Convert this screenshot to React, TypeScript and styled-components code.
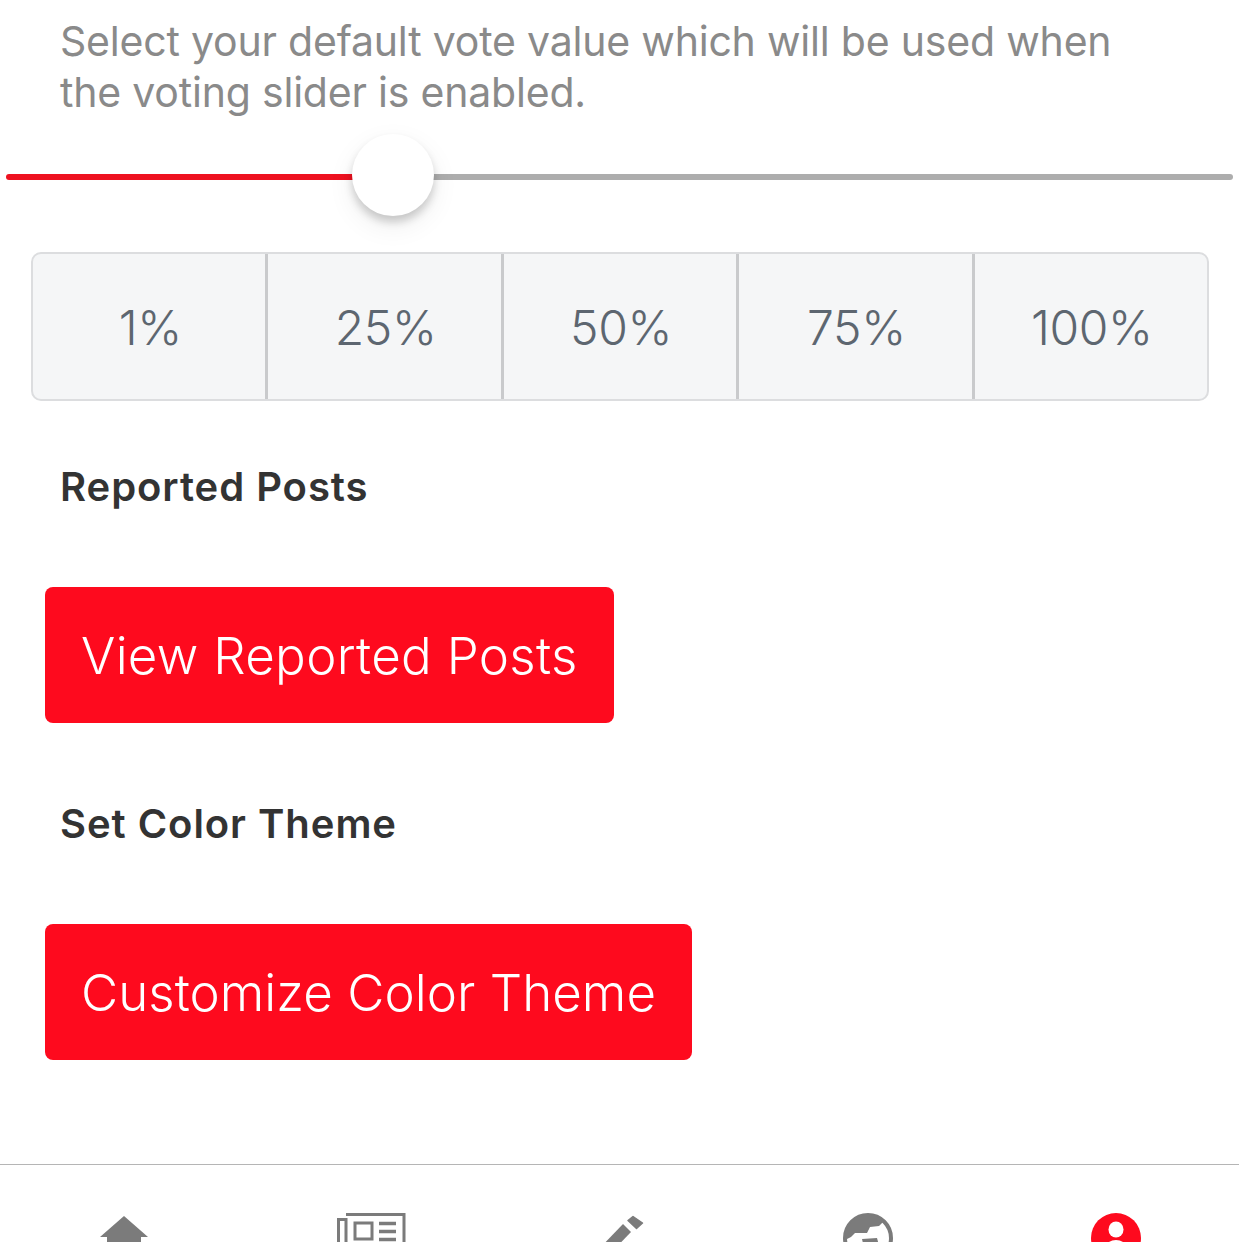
import React from 'react';
import styled, { createGlobalStyle } from 'styled-components';

const Global = createGlobalStyle`
    html, body {
        margin: 0;
        padding: 0;
        background: #fff;
    }
    body {
        font-family: Inter, "Liberation Sans", sans-serif;
    }
`

const Screen = styled.div`
    width: 1239px;
    height: 1242px;
    overflow: hidden;
    box-sizing: border-box;
    padding-top: 16px;
    display: flex;
    flex-direction: column;
    > * {
        flex-shrink: 0;
    }
`
const Description = styled.p`
    margin: 0;
    padding: 0 60px;
    font-size: 41px;
    line-height: 51px;
    font-weight: 400;
    letter-spacing: -0.2px;
    white-space: nowrap;
    color: #8a8a8a;
`
const Slider = styled.div`
    position: relative;
    height: 82px;
    margin: 16px 6px 0;
    display: flex;
    align-items: center;
`
const Track = styled.div<{ $on?: boolean }>`
    height: 6px;
    margin-top: 4px;
    border-radius: 3px;
    background: ${({ $on }) => ($on ? '#ee1120' : '#adadad')};
    flex: ${({ $on }) => ($on ? '0 0 350px' : '1')};
`
const Thumb = styled.div`
    position: absolute;
    left: 346px;
    top: 0;
    width: 82px;
    height: 82px;
    border-radius: 50%;
    background: #fff;
    box-shadow: 0 6px 8px rgba(0, 0, 0, 0.18), 0 10px 28px rgba(0, 0, 0, 0.07);
`
const Segments = styled.div`
    display: flex;
    height: 149px;
    box-sizing: border-box;
    margin: 36px 30px 0 31px;
    background: #f5f6f7;
    border: 2px solid #dcdddf;
    border-radius: 10px;
`
const Segment = styled.div`
    flex: 1;
    display: flex;
    align-items: center;
    justify-content: center;
    padding: 1px 0 0 2px;
    font-size: 48px;
    font-weight: 300;
    letter-spacing: -0.4px;
    color: #5d6670;
    &:not(:last-child) {
        border-right: 3px solid #c9cacc;
    }
`
const Heading = styled.h2<{ $top: number }>`
    margin: ${({ $top }) => $top}px 0 0;
    padding-left: 60px;
    font-size: 40px;
    line-height: 48px;
    font-weight: 600;
    letter-spacing: 0.95px;
    color: #333;
`
const ActionButton = styled.button<{ $tracking: number }>`
    align-self: flex-start;
    margin: 76px 0 0 45px;
    height: 136px;
    padding: 0 36px;
    border: 0;
    border-radius: 8px;
    background: #fe0a1e;
    color: #fff;
    font-family: inherit;
    font-size: 51px;
    font-weight: 350;
    letter-spacing: ${({ $tracking }) => $tracking}px;
    white-space: nowrap;
`
const TabBar = styled.nav`
    margin-top: 104px;
    border-top: 1px solid #b5b5b5;
    display: grid;
    grid-template-columns: 248px 248px 248px 248px 247px;
    padding-top: 48px;
`
const Tab = styled.div<{ $active?: boolean }>`
    display: flex;
    justify-content: center;
    color: ${({ $active }) => ($active ? '#fe0a1e' : '#7b7b7b')};
    svg {
        width: 50px;
        height: 50px;
        display: block;
    }
`
const NewsIcon = styled.svg`
    && {
        width: 70px;
        height: 52px;
    }
`

const levels = ['1%', '25%', '50%', '75%', '100%'];

export default function App() {
    return <Screen>
        <Global />
        <Description>
            Select your default vote value which will be used when<br />
            the voting slider is enabled.
        </Description>
        <Slider>
            <Track $on />
            <Track />
            <Thumb />
        </Slider>
        <Segments>
            {levels.map((level) => <Segment key={level}>{level}</Segment>)}
        </Segments>
        <Heading $top={62}>Reported Posts</Heading>
        <ActionButton $tracking={0.3}>View Reported Posts</ActionButton>
        <Heading $top={77}>Set Color Theme</Heading>
        <ActionButton $tracking={0.05}>Customize Color Theme</ActionButton>
        <TabBar>
            <Tab>
                <svg viewBox="0 0 50 50" fill="currentColor">
                    <path d="M25 3L49 24H42V50H8V24H1Z" />
                </svg>
            </Tab>
            <Tab>
                <NewsIcon viewBox="0 0 70 52" fill="none" stroke="currentColor" strokeWidth="3">
                    <path d="M9 1.5H67V50H1.5V6.5H9V50" />
                    <rect x="18" y="10" width="17" height="16" />
                    <path d="M42 10.5H59M42 18.5H59M42 26.5H59M18 35H59M18 43H59" strokeWidth="3.5" />
                </NewsIcon>
            </Tab>
            <Tab>
                <svg viewBox="0 0 50 50" fill="currentColor">
                    <path d="M38 3.5L47.5 10L41.5 15.5L33 7.5Z" stroke="currentColor" strokeWidth="1.5" strokeLinejoin="round" />
                    <path d="M28 11L36 19L10 46L0 50L2 38Z" />
                </svg>
            </Tab>
            <Tab>
                <svg viewBox="0 0 50 50">
                    <circle cx="25" cy="25" r="23" fill="none" stroke="currentColor" strokeWidth="4" />
                    <path d="M25 2A23 23 0 0 0 2 27L8 24L12 20L24 20L27 14L36 13L41 8A23 23 0 0 0 25 2Z" fill="currentColor" />
                    <path d="M19 26L34 25L37 36L22 39Z" fill="currentColor" />
                </svg>
            </Tab>
            <Tab $active>
                <svg viewBox="0 0 50 50">
                    <circle cx="25" cy="25" r="25" fill="currentColor" />
                    <ellipse cx="25" cy="16.5" rx="7.5" ry="8" fill="#fff" />
                    <ellipse cx="25" cy="42" rx="14" ry="15" fill="#fff" />
                </svg>
            </Tab>
        </TabBar>
    </Screen>
}
